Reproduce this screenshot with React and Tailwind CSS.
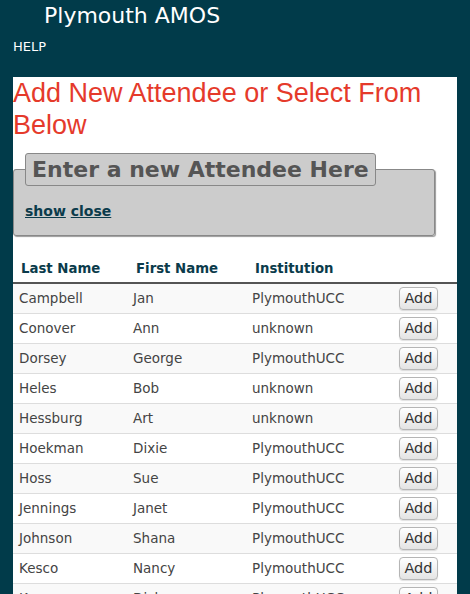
const attendees = [
  ['Campbell', 'Jan', 'PlymouthUCC'],
  ['Conover', 'Ann', 'unknown'],
  ['Dorsey', 'George', 'PlymouthUCC'],
  ['Heles', 'Bob', 'unknown'],
  ['Hessburg', 'Art', 'unknown'],
  ['Hoekman', 'Dixie', 'PlymouthUCC'],
  ['Hoss', 'Sue', 'PlymouthUCC'],
  ['Jennings', 'Janet', 'PlymouthUCC'],
  ['Johnson', 'Shana', 'PlymouthUCC'],
  ['Kesco', 'Nancy', 'PlymouthUCC'],
  ['Kramer', 'Dick', 'PlymouthUCC'],
];

export default function App() {
  return (
    <div className="h-[594px] overflow-hidden bg-[#013b4a] font-['DejaVu_Sans',sans-serif]">
      {/* header */}
      <div className="pl-[44px] pt-[3px] text-[22px] leading-[26px] text-white">Plymouth AMOS</div>
      <div className="pl-[13px] pt-[10px] text-[13px] leading-[15px] text-white">HELP</div>

      {/* white panel */}
      <div className="mx-[13px] mt-[23px] bg-white pb-4">
        <h1 className="text-[27px] leading-[32px] text-[#e53a2b] font-['Liberation_Sans',Arial,sans-serif]">
          Add New Attendee or Select From Below
        </h1>

        <fieldset className="mt-[12px] w-[95%] rounded-[3px] border border-[#888] bg-[#cccccc] px-[11px] pb-[15px] shadow-[1px_1px_1px_#999]">
          <legend className="rounded-[3px] border border-[#888] bg-[#cccccc] px-[6px] py-[3px] text-[22px] leading-[25px] font-bold text-[#555]">
            Enter a new Attendee Here
          </legend>
          <div className="mt-[17px] text-[14px] leading-[17px] font-bold text-[#0b3b4b]">
            <a href="#" className="underline">show</a> <a href="#" className="underline">close</a>
          </div>
        </fieldset>

        {/* table */}
        <div className="mt-[15px]">
          <div className="flex border-b-2 border-[#555] pt-[9px] pb-[5px] text-[13.3px] leading-[17px] font-bold text-[#0b3b4b]">
            <div className="w-[115px] pl-[8px]">Last Name</div>
            <div className="w-[119px] pl-[8px]">First Name</div>
            <div className="pl-[8px]">Institution</div>
          </div>
          {attendees.map((a, i) => (
            <div
              key={a[0]}
              className={`flex h-[30px] items-center border-b border-[#dddddd] text-[13.5px] leading-[17px] text-[#444] ${i % 2 === 0 ? 'bg-[#f9f9f9]' : 'bg-white'}`}
            >
              <div className="w-[114px] pl-[6px]">{a[0]}</div>
              <div className="w-[119px] pl-[6px]">{a[1]}</div>
              <div className="w-[153px] pl-[6px]">{a[2]}</div>
              <button className="h-[23px] w-[39px] rounded-[4px] border border-[#b5b5b5] bg-gradient-to-b from-white to-[#e4e4e4] text-[14.5px] leading-[17px] text-[#333] shadow-[0_1px_1px_rgba(0,0,0,0.12)]">
                Add
              </button>
            </div>
          ))}
        </div>
      </div>
    </div>
  );
}
